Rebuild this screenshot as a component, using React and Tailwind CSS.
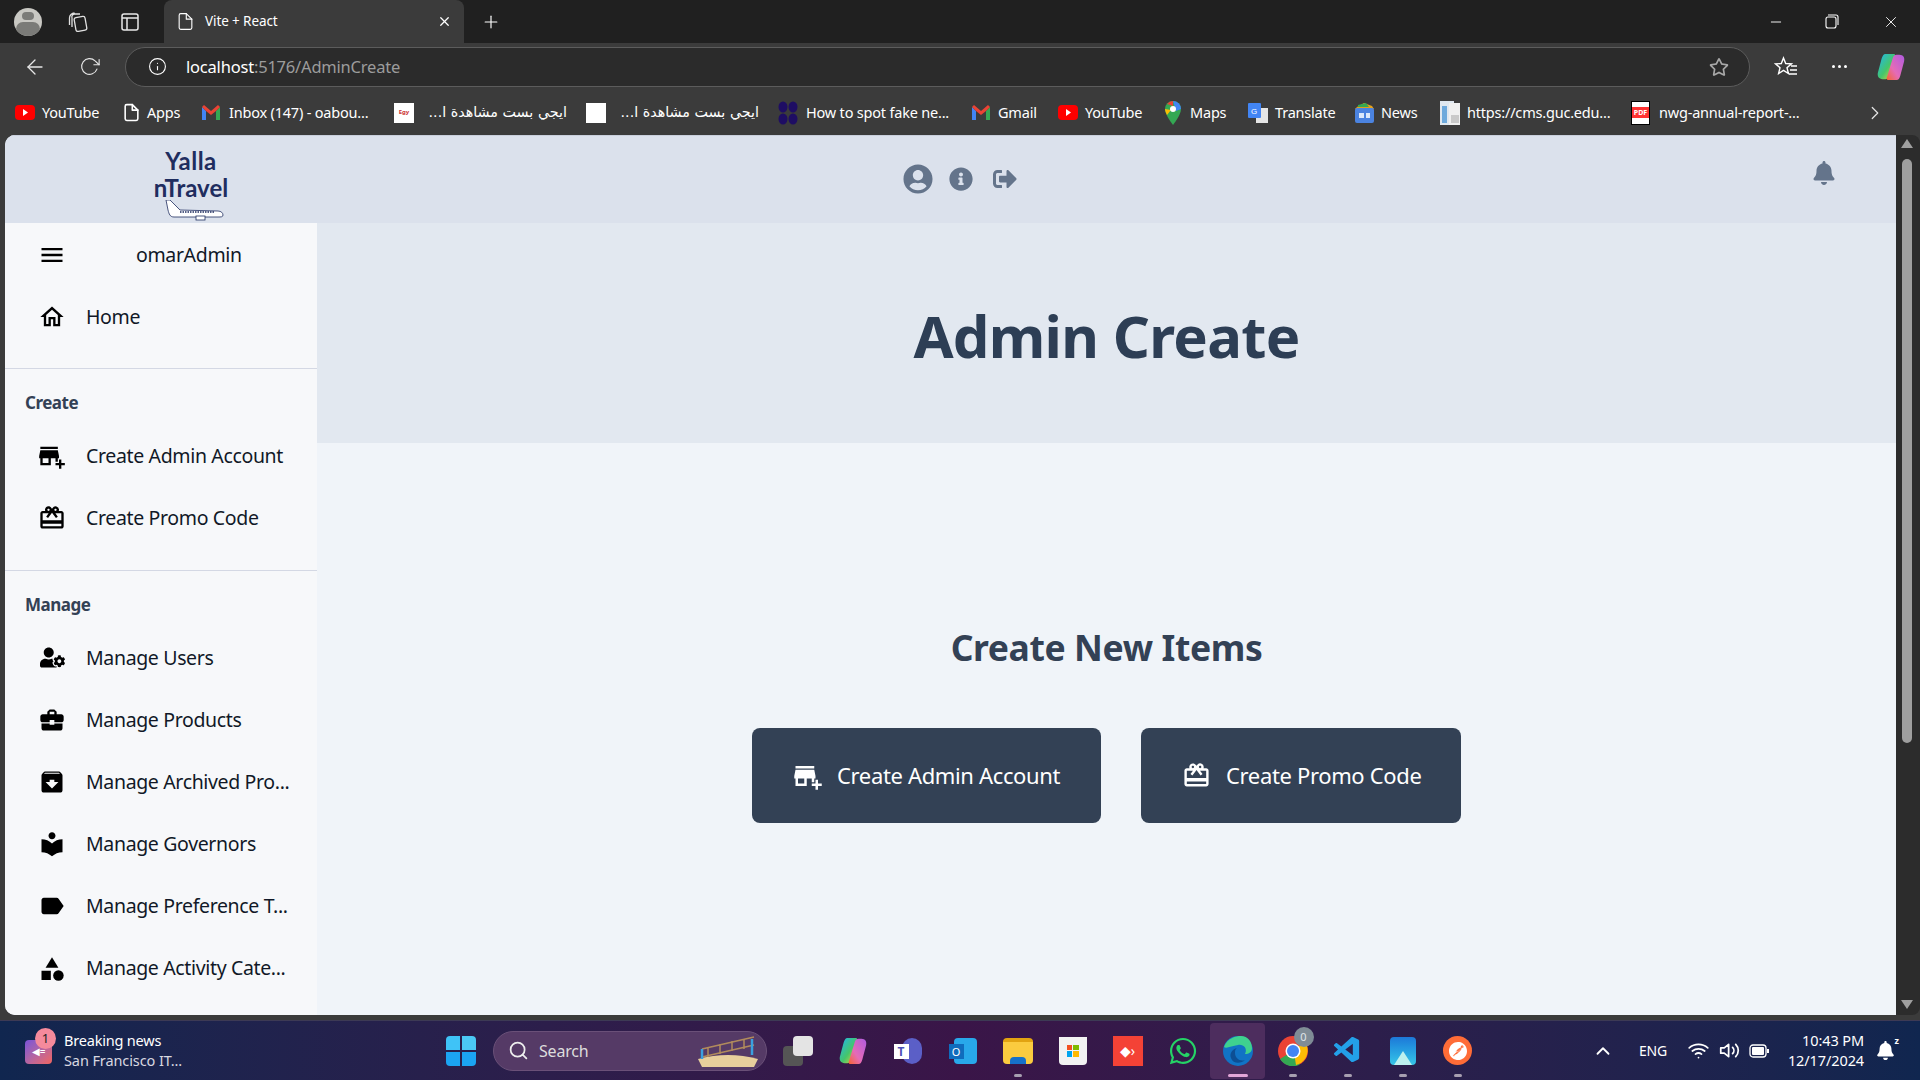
import React from "react";
import { FaUserCircle, FaInfoCircle, FaSignOutAlt, FaBell, FaUserCog, FaWhatsapp, FaRegStar } from "react-icons/fa";
import { MdAddBusiness, MdOutlineCardGiftcard, MdBusinessCenter, MdLocalLibrary, MdLabel, MdCategory, MdOutlineHome, MdMenu, MdArchive } from "react-icons/md";
import { VscVscode } from "react-icons/vsc";
import { SiPostman } from "react-icons/si";
import { FiFile, FiInfo, FiPlus, FiX, FiArrowLeft, FiRotateCw, FiChevronRight, FiMinus, FiSearch, FiChevronUp, FiWifi, FiVolume2 } from "react-icons/fi";

const Yt = () => (
  <svg width="20" height="15" viewBox="0 0 20 15"><rect width="20" height="15" rx="4" fill="#f00" /><path d="M8 4l5 3.5L8 11z" fill="#fff" /></svg>
);
const Gm = () => (
  <svg width="18" height="15" viewBox="0 0 18 15"><path d="M0 2v13h4V6z" fill="#4285f4" /><path d="M18 2v13h-4V6z" fill="#34a853" /><path d="M0 2l2-2 7 6 7-6 2 2-4 4-5 4-5-4z" fill="#ea4335" /></svg>
);
const Doc = () => <FiFile size={19} className="text-white" />;
const Egy = () => <div className="w-5 h-5 bg-white flex items-center justify-center text-[6px] font-bold text-[#c33]">Egy</div>;
const WhiteBox = () => <div className="w-5 h-5 bg-white" />;
const Dots = () => (
  <svg width="20" height="24" viewBox="0 0 20 24" fill="#1e0d63"><ellipse cx="5" cy="6" rx="4.5" ry="5.5" /><ellipse cx="15" cy="6" rx="4.5" ry="5.5" /><ellipse cx="5" cy="18" rx="4.5" ry="5.5" /><ellipse cx="15" cy="18" rx="4.5" ry="5.5" /></svg>
);
const MapsI = () => (
  <svg width="16" height="24" viewBox="0 0 16 24"><path d="M8 0a8 8 0 0 1 8 8c0 6-8 16-8 16S0 14 0 8a8 8 0 0 1 8-8z" fill="#34a853" /><path d="M2 3a8 8 0 0 1 6-3v5z" fill="#ea4335" /><path d="M8 0a8 8 0 0 1 8 8l-5 2z" fill="#4285f4" /><path d="M0 8c0 2 1 4 2 6l4-5z" fill="#fbbc04" /><circle cx="8" cy="8" r="3" fill="#fff" /></svg>
);
const Tr = () => (
  <svg width="20" height="20" viewBox="0 0 20 20"><rect x="8" y="5" width="12" height="15" fill="#e5e5e5" /><rect width="13" height="15" rx="1" fill="#4285f4" /><text x="3" y="11" fontSize="8" fill="#fff" fontFamily="Liberation Sans">G</text></svg>
);
const News = () => (
  <svg width="19" height="20" viewBox="0 0 19 20"><path d="M2 4l7-4 8 3 2 3H0z" fill="#e4a11b" /><path d="M3 2l8-2 3 4H3z" fill="#34a853" /><rect y="5" width="19" height="15" rx="2" fill="#4b83e0" /><rect x="4" y="10" width="5" height="5" fill="#dce8fb" /><rect x="11" y="10" width="4" height="5" fill="#dce8fb" /></svg>
);
const Cms = () => (
  <svg width="20" height="24" viewBox="0 0 20 24"><rect width="14" height="24" fill="#dfe7ef" /><rect x="2" y="5" width="5" height="17" fill="#6da9dc" /><rect x="9" y="2" width="11" height="22" fill="#f0f0f0" /><rect x="11" y="14" width="8" height="8" fill="#c9c9c9" /></svg>
);
const Pdf = () => (
  <div className="w-[19px] h-6 bg-white border border-black flex flex-col justify-center"><div className="bg-[#f33] text-white text-[7px] font-bold leading-[11px] text-center">PDF</div></div>
);

const bookmarks = [
  { i: <Yt />, t: "YouTube", w: "w-[107px]", b: "w-[27px]" },
  { i: <Doc />, t: "Apps", w: "w-[80px]", b: "w-[25px]" },
  { i: <Gm />, t: "Inbox (147) - oabou...", w: "w-[192px]", b: "w-[27px]" },
  { i: <Egy />, t: "ايجي بست مشاهدة ا...", w: "w-[192px]", b: "w-[34px]", r: true },
  { i: <WhiteBox />, t: "ايجي بست مشاهدة ا...", w: "w-[192px]", b: "w-[34px]", r: true },
  { i: <Dots />, t: "How to spot fake ne...", w: "w-[194px]", b: "w-[28px]" },
  { i: <Gm />, t: "Gmail", w: "w-[86px]", b: "w-[26px]" },
  { i: <Yt />, t: "YouTube", w: "w-[107px]", b: "w-[27px]" },
  { i: <MapsI />, t: "Maps", w: "w-[83px]", b: "w-[25px]" },
  { i: <Tr />, t: "Translate", w: "w-[107px]", b: "w-[27px]" },
  { i: <News />, t: "News", w: "w-[85px]", b: "w-[26px]" },
  { i: <Cms />, t: "https://cms.guc.edu...", w: "w-[191px]", b: "w-[27px]" },
  { i: <Pdf />, t: "nwg-annual-report-...", w: "w-[192px]", b: "w-[28px]" },
];

const Copilot = ({ s = 30 }) => (
  <svg width={s} height={s} viewBox="0 0 30 30">
    <defs>
      <linearGradient id="cpa" x1="0" y1="0" x2="1" y2="1"><stop offset="0" stopColor="#1fb6f2" /><stop offset="0.55" stopColor="#45c66a" /><stop offset="1" stopColor="#f7d13c" /></linearGradient>
      <linearGradient id="cpb" x1="1" y1="0" x2="0" y2="1"><stop offset="0" stopColor="#b05be0" /><stop offset="0.6" stopColor="#e56bb7" /><stop offset="1" stopColor="#f5652f" /></linearGradient>
    </defs>
    <path d="M9 1h9c2 0 2 2 1 4l-6 20c-1 2-2 3-4 3H6c-4 0-6-3-5-7L5 6c1-3 2-5 4-5z" fill="url(#cpa)" />
    <path d="M21 29h-9c-2 0-2-2-1-4l6-20c1-2 2-3 4-3h3c4 0 6 3 5 7l-4 15c-1 3-2 5-4 5z" fill="url(#cpb)" />
  </svg>
);

const Row = ({ icon, children }) => (
  <div className="h-[62.2px] flex items-center pl-[33px] shrink-0">
    <span className="w-7 h-7 flex items-center justify-center text-black">{icon}</span>
    <span className="ml-5 -mt-[1px] text-[19.5px] text-[#111827] whitespace-nowrap tracking-[-0.35px]">{children}</span>
  </div>
);

const Divider = () => <div className="h-px bg-[#d4d8e4] mt-5 shrink-0" />;
const Label = ({ children }) => (
  <div className="pt-[22px] pb-[10px] pl-5 shrink-0"><div className="h-6 leading-6 text-[17px] font-bold text-[#334155] tracking-[-0.5px]">{children}</div></div>
);

const FL = "[font-family:'Noto_Sans',sans-serif]";

const TB = ({ children, dot, active, hi }) => (
  <div className={`w-[55px] h-[56px] relative flex items-center justify-center shrink-0 rounded ${active ? "bg-[#4d2d5e]" : ""}`}>
    {children}
    {dot && <span className={`absolute bottom-[2px] left-1/2 -translate-x-1/2 h-[3px] rounded-full ${hi ? "w-5 bg-[#e3a6d8]" : "w-2 bg-[#a79fb0]"}`} />}
  </div>
);

export default function App() {
  return (
    <div className={`h-screen w-screen overflow-hidden flex flex-col bg-[#3b3b3b] ${FL}`}>
      {/* tab strip */}
      <div className="h-[43px] bg-[#202020] flex items-stretch text-white shrink-0">
        <div className="w-[164px] flex items-center shrink-0">
          <div className="ml-[14px] w-7 h-7 rounded-full bg-[#c9c8c3] relative overflow-hidden flex flex-col items-center">
            <span className="w-3 h-3 rounded-full bg-[#7b7b78] mt-1" />
            <span className="w-6 h-5 rounded-full bg-[#7b7b78] mt-[2px]" />
          </div>
          <svg className="ml-[26px]" width="20" height="20" viewBox="0 0 20 20" fill="none" stroke="#e0e0e0" strokeWidth="1.3"><rect x="7" y="5" width="11" height="14" rx="2" transform="rotate(-10 12 12)" /><path d="M4 15V6a3 3 0 0 1 3-4h5M1.500 13V6a5 5 0 0 1 5-5" /></svg>
          <svg className="ml-[33px]" width="18" height="18" viewBox="0 0 18 18" fill="none" stroke="#e8e8e8" strokeWidth="1.5"><rect x="1" y="1" width="16" height="16" rx="2" /><path d="M1 5h16M6 5v12" /></svg>
        </div>
        <div className="w-[300px] bg-[#3b3b3b] rounded-t-lg flex items-center pl-[12px] shrink-0">
          <FiFile size={19} className="text-white" strokeWidth={1.4} />
          <span className="ml-[10px] text-[13.5px] tracking-[-0.1px]">Vite + React</span>
          <FiX size={15} className="ml-auto mr-[12px]" />
        </div>
        <div className="flex items-center ml-[17px]"><FiPlus size={20} strokeWidth={1.4} /></div>
        <div className="ml-auto flex items-center">
          <FiMinus size={16} className="mr-[41px]" strokeWidth={1.4} />
          <svg className="mr-[43px]" width="14" height="15" viewBox="0 0 14 15" fill="none" stroke="#fff" strokeWidth="1.1"><rect x="1" y="3" width="10" height="11" rx="2" /><path d="M3 1h8a2 2 0 0 1 2 2v8" /></svg>
          <FiX size={18} className="mr-[20px]" strokeWidth={1.2} />
        </div>
      </div>
      {/* toolbar */}
      <div className="h-[47px] bg-[#3b3b3b] flex items-center text-white shrink-0">
        <FiArrowLeft size={24} className="ml-[23px] text-[#e6e6e6]" strokeWidth={1.3} />
        <FiRotateCw size={21} className="ml-[32px] text-[#e6e6e6]" strokeWidth={1.3} />
        <div className="ml-[25px] w-[1625px] h-[40px] rounded-full border border-[#5c5c5c] bg-[#2b2b2b] flex items-center pl-[22px] pr-[20px]">
          <FiInfo size={19} className="text-white" strokeWidth={1.4} />
          <span className="ml-[19px] mt-[1px] text-[16.5px] tracking-[-0.2px]">localhost<span className="text-[#9c9c9c]">:5176/AdminCreate</span></span>
          <FaRegStar size={20} className="ml-auto text-[#a8a8a8]" />
        </div>
        <div className="w-[69px] flex justify-center ml-0">
          <svg className="ml-[3px]" width="24" height="24" viewBox="0 0 24 24" fill="none" stroke="#fff" strokeWidth="1.4"><path d="M9.500 3l2.200 5.500 5.800.4-4.500 3.800 1.400 5.800-4.900-3.200-4.900 3.200 1.400-5.800L1.500 8.900l5.800-.4z" /><path d="M17 11h6M16 15h7M15 19h8" /></svg>
        </div>
        <div className="w-[40px] flex justify-center gap-[3px]"><span className="w-[3px] h-[3px] rounded-full bg-white" /><span className="w-[3px] h-[3px] rounded-full bg-white" /><span className="w-[3px] h-[3px] rounded-full bg-white" /></div>
        <div className="ml-[18px]"><Copilot s={28} /></div>
      </div>
      {/* bookmarks */}
      <div className="h-[45px] bg-[#3b3b3b] flex items-center pl-[15px] text-white shrink-0">
        {bookmarks.map((b, idx) => (
          <div key={idx} className={`${b.w} flex items-center shrink-0`}>
            <span className={`${b.b} shrink-0 flex items-center`}>{b.i}</span>
            {b.r ? (
              <span dir="rtl" className="w-[139px] text-[14.3px] tracking-[-0.1px] whitespace-nowrap [font-family:'DejaVu_Sans',sans-serif] text-right overflow-hidden">{b.t}</span>
            ) : (
              <span className="text-[14.5px] tracking-[-0.2px] whitespace-nowrap">{b.t}</span>
            )}
          </div>
        ))}
        <FiChevronRight size={22} className="ml-[41px] text-[#e6e6e6]" strokeWidth={1.3} />
      </div>
      {/* page */}
      <div className="h-[880px] flex pl-[5px] shrink-0">
        <div className="w-[1891px] rounded-l-[10px] overflow-hidden flex flex-col bg-[#f0f4f9]">
          <header className="h-[88px] bg-[#dbe1ec] flex items-center shrink-0 border-t border-[#c9cfdc]">
            <div className="ml-[148px] w-[76px] h-full flex flex-col items-center pt-[11px] shrink-0 text-[#1f2d5f] font-bold [font-family:'Lato',sans-serif]">
              <div className="text-[24px] leading-[27px] tracking-[0.5px]">Yalla</div>
              <div className="text-[24px] leading-[27px] whitespace-nowrap">nTravel</div>
              <svg className="-mt-[1px] ml-[6px] shrink-0" width="60" height="22" viewBox="0 0 60 22">
                <path d="M2 0l4 0 10 10 38 1c3 0 5 2 5 4s-2 2-5 2H10C6 17 5 14 4 10z" fill="#fff" stroke="#1f2d5f" strokeWidth="0.8" />
                <path d="M16 12h34" stroke="#1f2d5f" strokeWidth="1.500" strokeDasharray="1.500 1" />
                <rect x="32" y="16" width="9" height="4" fill="#fff" stroke="#1f2d5f" strokeWidth="0.8" />
              </svg>
            </div>
            <div className="ml-[674px] -mt-[2px] flex items-center text-[#64748b] shrink-0">
              <FaUserCircle size={30} />
              <FaInfoCircle size={24} className="ml-[16px]" />
              <FaSignOutAlt size={24} className="ml-[20px]" />
            </div>
            <FaBell size={24} className="ml-auto mr-[60px] -mt-[14px] text-[#64748b]" />
          </header>
          <div className="flex flex-1 min-h-0">
            <aside className="w-[312px] bg-[#f7f8fa] flex flex-col shrink-0 overflow-hidden">
              <div className="h-[63px] flex items-center pl-[33px] shrink-0">
                <span className="w-7 h-7 flex items-center justify-center"><MdMenu size={30} className="text-black" /></span>
                <span className="ml-[70px] text-[19.5px] text-[#111827] tracking-[-0.35px]">omarAdmin</span>
              </div>
              <Row icon={<MdOutlineHome size={34} />}>Home</Row>
              <Divider />
              <Label>Create</Label>
              <Row icon={<MdAddBusiness size={32} />}>Create Admin Account</Row>
              <Row icon={<MdOutlineCardGiftcard size={30} />}>Create Promo Code</Row>
              <Divider />
              <Label>Manage</Label>
              <Row icon={<FaUserCog size={25} />}>Manage Users</Row>
              <Row icon={<MdBusinessCenter size={30} />}>Manage Products</Row>
              <Row icon={<MdArchive size={30} />}>Manage Archived Pro...</Row>
              <Row icon={<MdLocalLibrary size={30} />}>Manage Governors</Row>
              <Row icon={<MdLabel size={30} />}>Manage Preference T...</Row>
              <Row icon={<MdCategory size={30} />}>Manage Activity Cate...</Row>
            </aside>
            <main className="flex-1 flex flex-col">
              <div className="h-[220px] bg-[#e2e8f0] flex items-center justify-center shrink-0">
                <h1 className="text-[58px] font-bold text-[#2d3e55] tracking-[-0.7px] leading-none mt-[6px]">Admin Create</h1>
              </div>
              <div className="flex flex-col items-center pt-[184px]">
                <h2 className="h-10 leading-10 text-[35.5px] font-bold text-[#334155] tracking-[-0.4px]">Create New Items</h2>
                <div className="flex gap-[40px] mt-[61px]">
                  <button className="w-[349px] h-[95px] rounded-lg bg-[#334155] text-white flex items-center pl-[41px] text-[22px] tracking-[-0.35px]">
                    <MdAddBusiness size={30} /><span className="ml-[14px]">Create Admin Account</span>
                  </button>
                  <button className="w-[320px] h-[95px] rounded-lg bg-[#334155] text-white flex items-center pl-[41px] text-[22px] tracking-[-0.35px]">
                    <MdOutlineCardGiftcard size={29} /><span className="ml-[15px]">Create Promo Code</span>
                  </button>
                </div>
              </div>
            </main>
          </div>
        </div>
        <div className="w-[24px] bg-[#2c2c2c] rounded-r-lg flex flex-col items-center shrink-0 relative pr-[2px]">
          <span className="mt-[4px] w-0 h-0 border-x-[6px] border-x-transparent border-b-[9px] border-b-[#9f9f9f]" />
          <span className="mt-[11px] w-[10px] h-[584px] rounded-full bg-[#9f9f9f]" />
          <span className="mt-auto mb-[6px] w-0 h-0 border-x-[6px] border-x-transparent border-t-[9px] border-t-[#9f9f9f]" />
        </div>
      </div>
      <div className="h-[5px] bg-[#3b3b3b] shrink-0" />
      {/* taskbar */}
      <div className="h-[60px] flex items-center text-white shrink-0 bg-gradient-to-r from-[#10264f] via-[#3a1548] to-[#10264f] border-t border-[#3d3a55] relative">
        <div className="ml-[25px] w-[28px] h-[26px] relative shrink-0 mt-[4px]">
          <div className="absolute left-0 top-0 w-[27px] h-[24px] rounded bg-gradient-to-br from-[#7a50d8] to-[#f2645c] flex items-center justify-center text-[10px]">◀=</div>
          <div className="absolute -top-[12px] left-[10px] w-[21px] h-[21px] rounded-full bg-[#f58a9c] text-[#222] text-[13px] leading-[21px] text-center">1</div>
        </div>
        <div className="ml-[11px] -mt-[2px] w-[131px] shrink-0 text-[14.5px] leading-[20px] tracking-[-0.2px]">
          <div>Breaking news</div>
          <div className="text-[#d8d8e0] tracking-[-0.1px] whitespace-nowrap">San Francisco IT...</div>
        </div>
        <div className="ml-[251px] grid grid-cols-2 gap-[2px] w-[30px] h-[30px] shrink-0">
          <span className="bg-[#3fc3f7] rounded-tl-sm" /><span className="bg-[#4bc9f5] rounded-tr-sm" /><span className="bg-[#1ba4f2] rounded-bl-sm" /><span className="bg-[#1ba4f2] rounded-br-sm" />
        </div>
        <div className="ml-[17px] w-[274px] h-[40px] rounded-full bg-[#553a66] border border-[#6a5078] flex items-center pl-[14px] shrink-0">
          <FiSearch size={21} className="text-[#eee]" />
          <span className="ml-[10px] text-[16px] text-[#ddd] tracking-[-0.2px]">Search</span>
          <svg className="ml-auto mr-[6px]" width="64" height="32" viewBox="0 0 64 32"><path d="M2 24q30-8 60 0l-4 8H6z" fill="#e8cf9c" /><path d="M6 14L58 2M6 22L58 10M12 12v10M24 9v10M36 6v10M48 4v10" stroke="#b08a5c" strokeWidth="1.500" /><path d="M6 14v10M56 4v16" stroke="#3aa0e0" strokeWidth="2.500" /></svg>
        </div>
        <div className="ml-[3px] flex items-center shrink-0">
          <TB><div className="relative w-[30px] h-[30px]"><span className="absolute left-0 bottom-0 w-5 h-5 bg-[#555] rounded-sm" /><span className="absolute right-0 top-0 w-5 h-5 bg-[#e4e4e4] rounded-sm" /></div></TB>
          <TB><Copilot s={28} /></TB>
          <TB><div className="relative w-7 h-7"><span className="absolute right-0 top-[1px] w-[20px] h-[26px] rounded-full bg-[#5b5fc7]" /><span className="absolute left-0 top-[7px] w-[15px] h-[15px] bg-white text-[#4b4fb8] text-[12px] font-bold leading-[15px] text-center">T</span></div></TB>
          <TB><div className="relative w-7 h-7"><span className="absolute right-0 top-[1px] w-[23px] h-[26px] rounded bg-[#28a8ea]" /><span className="absolute left-0 top-[7px] w-[15px] h-[15px] bg-[#0f6cbd] text-white text-[11px] leading-[15px] text-center">O</span></div></TB>
          <TB dot><div className="w-[30px] h-[26px] rounded-sm bg-[#fbcb3f] border-t-4 border-[#e2a311] flex items-end justify-center"><span className="w-4 h-[7px] bg-[#1671c9] rounded-t-sm" /></div></TB>
          <TB><div className="w-[28px] h-[28px] rounded-b bg-[#f2f2f2] grid grid-cols-2 gap-[1px] p-[8px]"><span className="bg-[#f25022]" /><span className="bg-[#7fba00]" /><span className="bg-[#00a4ef]" /><span className="bg-[#ffb900]" /></div></TB>
          <TB><div className="w-[30px] h-[30px] bg-[#f44236] flex items-center justify-center text-white text-[14px]">◆›</div></TB>
          <TB><FaWhatsapp size={30} className="text-[#25d366]" /></TB>
          <TB dot active hi><svg width="30" height="32" viewBox="0 0 30 32"><circle cx="15" cy="16" r="15" fill="#1173c5" /><path d="M1 12C4 3 13 1 18 1c7 0 11 6 11 12 0 4-3 6-7 6 3-6-2-10-7-9-6 1-12 4-14 2z" fill="#3fd18f" /><path d="M12 18c0 5 5 9 10 7-4 4-12 4-14-2-2-5 2-9 6-10-2 1-2 3-2 5z" fill="#0d4f94" /></svg></TB>
          <TB dot><div className="relative"><svg width="30" height="30" viewBox="0 0 30 30"><circle cx="15" cy="15" r="15" fill="#ea4335" /><path d="M2 23A15 15 0 0 0 21 29l7-14H15z" fill="#34a853" /><path d="M15 10h14a15 15 0 0 1-11 19z" fill="#fbbc04" /><circle cx="15" cy="15" r="7.500" fill="#fff" /><circle cx="15" cy="15" r="6" fill="#4285f4" /></svg><span className="absolute -top-[9px] left-[16px] w-[20px] h-[20px] rounded-full bg-[#7f8c96] text-[11px] leading-[20px] text-center text-[#dfe4e8]">0</span></div></TB>
          <TB dot><VscVscode size={31} className="text-[#23a0e8]" /></TB>
          <TB dot><div className="w-[26px] h-[28px] rounded bg-gradient-to-b from-[#1e78d8] to-[#38c6e8] flex items-end justify-center"><span className="w-0 h-0 border-x-[9px] border-x-transparent border-b-[14px] border-b-[#bdf0ee]" /></div></TB>
          <TB dot><div className="w-[29px] h-[29px] rounded-full bg-[#ff6c37] flex items-center justify-center"><SiPostman size={18} className="text-white" /></div></TB>
        </div>
        <div className="ml-[107px] flex items-center shrink-0">
          <FiChevronUp size={22} />
          <span className="ml-[25px] text-[14px] tracking-[-0.2px]">ENG</span>
          <FiWifi size={21} className="ml-[21px]" />
          <FiVolume2 size={21} className="ml-[10px]" />
          <svg className="ml-[9px]" width="20" height="14" viewBox="0 0 20 14" fill="none"><rect x="1" y="1" width="16" height="12" rx="3" stroke="#fff" strokeWidth="1.300" /><rect x="3" y="3" width="12" height="8" rx="1" fill="#fff" /><rect x="18" y="5" width="2" height="4" fill="#fff" /></svg>
        </div>
        <div className="ml-[5px] -mt-[2px] w-[90px] text-right text-[14.5px] leading-[20px] tracking-[-0.1px] shrink-0">
          <div>10:43 PM</div>
          <div>12/17/2024</div>
        </div>
        <div className="ml-[12px] relative shrink-0">
          <FaBell size={19} />
          <span className="absolute -top-[5px] -right-[4px] text-[9px] leading-none font-bold">z</span>
        </div>
      </div>
    </div>
  );
}
